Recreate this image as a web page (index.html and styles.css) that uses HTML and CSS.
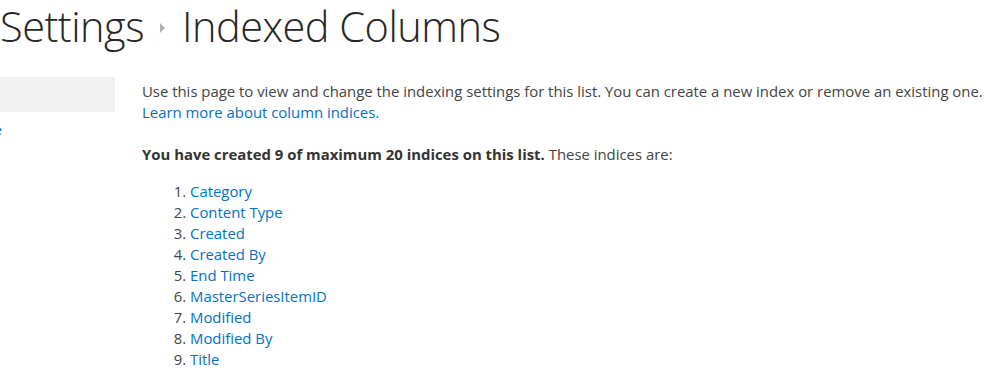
FILE: index.html
```html
<!DOCTYPE html>
<html lang="en">
<head>
    <meta charset="UTF-8">
    <title>Settings - Indexed Columns</title>
    <link rel="stylesheet" href="styles.css">
</head>
<body>
    <h1 class="page-title">
        <span class="crumb">Settings</span>
        <span class="crumb-sep"></span>
        <span class="crumb current">Indexed Columns</span>
    </h1>

    <div class="page">
        <div class="side-nav">
            <div class="nav-box"></div>
            <div class="nav-link">e</div>
        </div>

        <div class="content">
            <p class="intro">
                Use this page to view and change the indexing settings for this list. You can create a new index or remove an existing one.<br>
                <a href="#">Learn more about column indices.</a>
            </p>

            <p class="summary">
                <strong>You have created 9 of maximum 20 indices on this list.</strong> These indices are:
            </p>

            <ol class="index-list">
                <li><a href="#">Category</a></li>
                <li><a href="#">Content Type</a></li>
                <li><a href="#">Created</a></li>
                <li><a href="#">Created By</a></li>
                <li><a href="#">End Time</a></li>
                <li><a href="#">MasterSeriesItemID</a></li>
                <li><a href="#">Modified</a></li>
                <li><a href="#">Modified By</a></li>
                <li><a href="#">Title</a></li>
            </ol>
        </div>
    </div>
</body>
</html>
```

FILE: styles.css
```css
body {
    margin: 0;
    font-family: 'Open Sans', 'Noto Sans', sans-serif;
    color: #444;
    background: #fff;
    overflow: hidden;
}

a {
    color: #0072c6;
    text-decoration: none;
}

.page-title {
    display: flex;
    align-items: center;
    margin: 0;
    line-height: 52px;
    font-size: 41.5px;
    font-weight: 300;
    color: #262626;
    letter-spacing: -0.5px;
}

.crumb-sep {
    width: 0;
    height: 0;
    margin: 4px 17px 0 16px;
    border-top: 5px solid transparent;
    border-bottom: 5px solid transparent;
    border-left: 5px solid #b2b2b2;
}

.page {
    display: flex;
}

.side-nav {
    width: 142px;
    flex-shrink: 0;
    padding-top: 25px;
}

.nav-box {
    width: 115px;
    height: 35px;
    background: #f1f1f1;
}

.nav-link {
    margin: 8px 0 0 -6px;
    font-size: 14px;
    color: #0072c6;
}

.content {
    padding-top: 29px;
    font-size: 14.9px;
    line-height: 21px;
}

.intro,
.summary {
    margin: 0 0 21px 0;
}

.summary strong {
    font-weight: 700;
    color: #333;
}

.summary {
    margin-bottom: 16px;
}

.index-list {
    margin: 0;
    padding-left: 48px;
}
```
